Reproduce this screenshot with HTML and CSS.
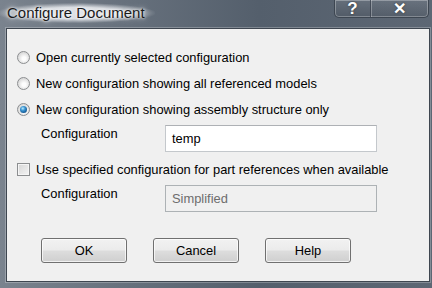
FILE: index.html
```html
<!DOCTYPE html>
<html lang="en">
<head>
    <meta charset="UTF-8">
    <meta name="viewport" content="width=device-width, initial-scale=1.0">
    <title>Configure Document</title>
    <link rel="stylesheet" href="styles.css">
</head>
<body>
    <div class="window">
        <div class="titlebar">
            <span class="title">Configure Document</span>
            <div class="caption-buttons">
                <span class="cap-btn help-btn">?</span>
                <span class="cap-btn close-btn">&#x2715;</span>
            </div>
        </div>
        <div class="client">
            <label class="option">
                <span class="radio"></span>
                <span>Open currently selected configuration</span>
            </label>
            <label class="option">
                <span class="radio"></span>
                <span>New configuration showing all referenced models</span>
            </label>
            <label class="option">
                <span class="radio checked"></span>
                <span>New configuration showing assembly structure only</span>
            </label>
            <div class="field">
                <span class="field-label">Configuration</span>
                <div class="textbox">temp</div>
            </div>
            <label class="option check-row">
                <span class="checkbox"></span>
                <span>Use specified configuration for part references when available</span>
            </label>
            <div class="field">
                <span class="field-label">Configuration</span>
                <div class="textbox disabled">Simplified</div>
            </div>
            <div class="actions">
                <button class="btn">OK</button>
                <button class="btn">Cancel</button>
                <button class="btn">Help</button>
            </div>
        </div>
    </div>
</body>
</html>
```

FILE: styles.css
```css
body {
    margin: 0;
    padding: 0;
    font-family: "Liberation Sans", Arial, sans-serif;
    color: #000;
}

.window {
    width: 432px;
    height: 288px;
    display: flex;
    flex-direction: column;
    background: linear-gradient(90deg, #7a838e 0%, #66707c 30%, #545f6c 60%, #5d6774 100%);
}

.titlebar {
    height: 28px;
    display: flex;
    align-items: flex-start;
    flex-shrink: 0;
}

.title {
    margin: 3px 0 0 -3px;
    padding: 0 10px;
    font-size: 15px;
    line-height: 20px;
    color: #1a1a1a;
    background: radial-gradient(ellipse at center, rgba(235, 238, 242, 0.85) 40%, rgba(235, 238, 242, 0) 72%);
    text-shadow: 0 0 6px #fff, 0 0 3px #fff;
}

.caption-buttons {
    margin-left: auto;
    margin-right: 3px;
    display: flex;
    height: 17px;
    border: 1px solid #3d4651;
    border-top: none;
    border-radius: 0 0 5px 5px;
    box-shadow: inset 0 0 0 1px rgba(255, 255, 255, 0.3);
    overflow: hidden;
}

.cap-btn {
    display: flex;
    align-items: center;
    justify-content: center;
    color: #fff;
    font-weight: bold;
    text-shadow: 0 0 2px #333;
    background: linear-gradient(180deg, rgba(255, 255, 255, 0.08), rgba(0, 0, 0, 0.08));
}

.help-btn {
    width: 35px;
    font-size: 17px;
    border-right: 1px solid rgba(60, 68, 80, 0.8);
    box-shadow: 1px 0 0 rgba(255, 255, 255, 0.3);
}

.close-btn {
    width: 57px;
    font-size: 16px;
}

.client {
    flex: 1;
    margin: 0 2px 6px 6px;
    background: #f0f0f0;
    border: 1px solid #3e4650;
    box-shadow: 0 0 0 1px rgba(255, 255, 255, 0.25);
    padding: 15px 0 0 10px;
    display: flex;
    flex-direction: column;
    font-size: 12.9px;
}

.option {
    height: 26px;
    display: flex;
    align-items: center;
    gap: 6px;
}

.radio {
    width: 11px;
    height: 11px;
    border: 1px solid #8c8e90;
    border-radius: 50%;
    background: radial-gradient(circle at 55% 60%, #fdfdfd 20%, #e0e0e0 60%, #c8c8c8 100%);
    position: relative;
}

.radio.checked::after {
    content: "";
    position: absolute;
    left: 2px;
    top: 2px;
    width: 7px;
    height: 7px;
    border-radius: 50%;
    background: radial-gradient(circle at 40% 35%, #b9ecff 0%, #3a93d0 35%, #0d4f89 80%);
}

.checkbox {
    width: 11px;
    height: 11px;
    border: 1px solid #8c8e90;
    background: linear-gradient(135deg, #d6d6d6, #f4f4f4);
    box-shadow: inset 0 0 0 1px #f5f5f5;
}

.field {
    display: flex;
    align-items: flex-start;
    margin-top: 3px;
    padding-left: 24px;
}

.field-label {
    width: 124px;
    line-height: 16px;
    padding-top: 1px;
}

.textbox {
    width: 204px;
    height: 25px;
    border: 1px solid #c4c8cc;
    border-top-color: #aeb1b5;
    background: #fff;
    padding: 0 0 0 6px;
    line-height: 25px;
}

.textbox.disabled {
    background: #f0f0f0;
    border-color: #adb2b5;
    color: #6d6d6d;
}

.check-row {
    margin-top: 4px;
}

.actions {
    display: flex;
    gap: 26px;
    padding-left: 24px;
    margin-top: 26px;
}

.btn {
    width: 86px;
    height: 25px;
    padding: 0;
    font-family: inherit;
    font-size: 12.9px;
    color: #000;
    border: 1px solid #707070;
    border-radius: 3px;
    background: linear-gradient(180deg, #f2f2f2 0%, #ebebeb 48%, #dddddd 52%, #cfcfcf 100%);
    box-shadow: inset 0 0 0 1px rgba(255, 255, 255, 0.7);
}
```
